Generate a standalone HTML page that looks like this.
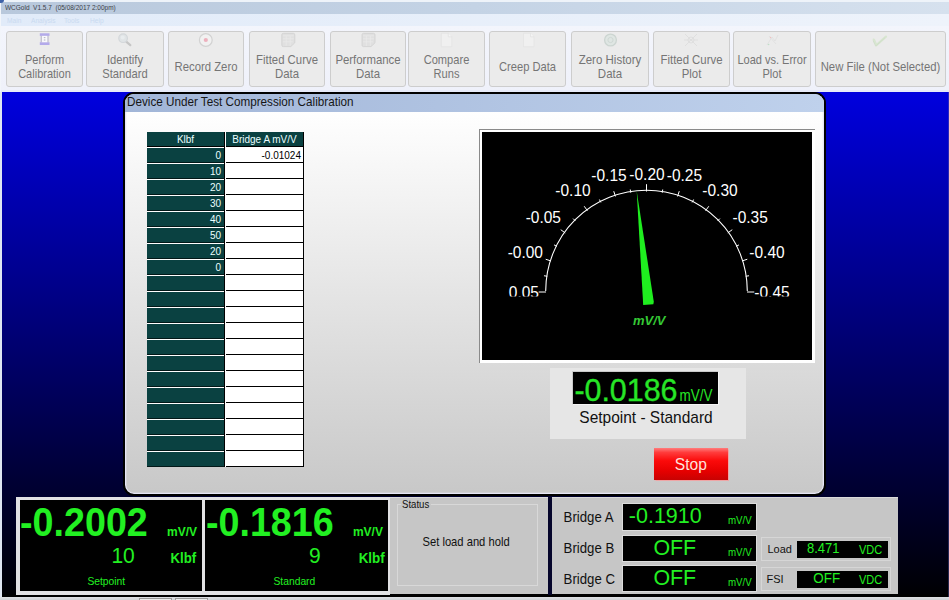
<!DOCTYPE html>
<html><head><meta charset="utf-8"><title>WCGold</title>
<style>
*{margin:0;padding:0;box-sizing:border-box}
html,body{width:949px;height:600px;overflow:hidden;background:#f0f0f0;font-family:"Liberation Sans",sans-serif;}
.a{position:absolute}
.t{position:absolute;white-space:nowrap;line-height:1}
#titlebar{left:0;top:0;width:949px;height:14px;background:linear-gradient(to right,#b8c8dc,#c4d3e5 50%,#d6e1ee)}
#topline{left:0;top:0;width:949px;height:2px;background:#eef3f9}
#menubar{left:0;top:14px;width:949px;height:12px;background:linear-gradient(to right,#e1ebf9,#eef3fb)}
#toolbar{left:0;top:26px;width:949px;height:66px;background:linear-gradient(#f3f5fc,#eff1fa);border-bottom:2px solid #e6eaf8}
.tb{position:absolute;top:31px;height:56px;background:#ebebeb;border:1px solid #cdcdcd;border-radius:3px;color:#757575;font-size:11.5px;text-align:center;line-height:14px}
.tb span{position:absolute;left:0;right:0;transform:scale(var(--sx),1.09);transform-origin:50% 11px;margin-top:-0.5px}
#blue{left:0;top:92px;width:949px;height:505px;background:linear-gradient(#0000de 0%,#000002 100%)}
#panel{left:123px;top:92px;width:703px;height:404px;border:2px solid #000;border-radius:11px;box-shadow:inset 0 0 0 1.3px #e6e6f6;background:linear-gradient(#ffffff 0%,#ffffff 4%,#c8c8c8 100%);overflow:hidden}
#ptitle{left:0;top:0;width:699px;height:17.5px;background:linear-gradient(to right,#a2b6d8,#bfd1ec)}

.hd{background:#0a4141;color:#eaffff;font-size:10px;text-align:center;line-height:15px;border-bottom:1px solid #000}
.lc{left:0;width:77px;height:15px;background:#0a4141;color:#eaffff;font-size:10px;text-align:right;padding-right:3px;line-height:15px;border-bottom:1px solid #021818}
.rc{left:79px;width:77px;height:16px;background:#fff;color:#000;font-size:10px;text-align:right;padding-right:2px;line-height:17px;border-bottom:1px solid #000}
</style></head><body>
<div class="a" id="titlebar"></div><div class="a" id="topline"></div>
<div class="t" style="left:5px;top:4px;font-size:7.5px;color:#3c4148;transform-origin:0 0;transform:scaleX(0.865)">WCGold&nbsp; V1.5.7&nbsp; (05/08/2017 2:00pm)</div>
<div class="a" id="menubar"></div>
<div class="t" style="left:7px;top:16.5px;font-size:7.5px;color:#c9daf0;transform-origin:0 0;transform:scaleX(0.88)">Main</div><div class="t" style="left:31px;top:16.5px;font-size:7.5px;color:#c9daf0;transform-origin:0 0;transform:scaleX(0.88)">Analysis</div><div class="t" style="left:64px;top:16.5px;font-size:7.5px;color:#c9daf0;transform-origin:0 0;transform:scaleX(0.88)">Tools</div><div class="t" style="left:90px;top:16.5px;font-size:7.5px;color:#c9daf0;transform-origin:0 0;transform:scaleX(0.88)">Help</div>
<div class="a" id="toolbar"></div>
<div class="a" style="left:0;top:2px;width:1.4px;height:90px;background:#f2f5fa"></div><div class="a" style="left:0;top:0;width:4px;height:3px;background:#3f63a8;border-bottom-right-radius:4px"></div>
<!--TOOLBAR0-->
<div class="tb" style="left:6px;width:77px;--sx:0.958"><span style="top:21px">Perform</span><span style="top:35px">Calibration</span></div>
<div class="tb" style="left:86px;width:78px;--sx:0.975"><span style="top:21px">Identify</span><span style="top:35px">Standard</span></div>
<div class="tb" style="left:168px;width:76px;--sx:0.985"><span style="top:28px">Record Zero</span></div>
<div class="tb" style="left:249px;width:76px;--sx:0.990"><span style="top:21px">Fitted Curve</span><span style="top:35px">Data</span></div>
<div class="tb" style="left:330px;width:76px;--sx:0.990"><span style="top:21px">Performance</span><span style="top:35px">Data</span></div>
<div class="tb" style="left:408px;width:77px;--sx:0.965"><span style="top:21px">Compare</span><span style="top:35px">Runs</span></div>
<div class="tb" style="left:489px;width:77px;--sx:0.972"><span style="top:28px">Creep Data</span></div>
<div class="tb" style="left:571px;width:78px;--sx:1.000"><span style="top:21px">Zero History</span><span style="top:35px">Data</span></div>
<div class="tb" style="left:653px;width:77px;--sx:0.990"><span style="top:21px">Fitted Curve</span><span style="top:35px">Plot</span></div>
<div class="tb" style="left:733px;width:78px;--sx:0.958"><span style="top:21px">Load vs. Error</span><span style="top:35px">Plot</span></div>
<div class="tb" style="left:815px;width:131px;--sx:0.985"><span style="top:28px">New File (Not Selected)</span></div>
<svg class="a" style="left:0;top:28px" width="949" height="24" viewBox="0 28 949 24">
<rect x="39.8" y="33.3" width="9.7" height="2.6" fill="#b3aaea"/><rect x="39.8" y="42.2" width="9.7" height="2.8" fill="#b3aaea"/><rect x="40.6" y="35.9" width="1.5" height="6.3" fill="#c4c2d2"/><rect x="47.2" y="35.9" width="1.5" height="6.3" fill="#c4c2d2"/><rect x="42.1" y="35.9" width="5.1" height="6.3" fill="#f8f8fc"/><rect x="43.8" y="37" width="1.6" height="1.2" fill="#bcbcc8"/><rect x="43.8" y="39.4" width="1.6" height="1.2" fill="#bcbcc8"/>
<path d="M126.2 41.6L130.3 45.2" stroke="#c6c6c6" stroke-width="2.2" stroke-linecap="round"/><circle cx="123.1" cy="38.2" r="4.3" fill="#e0e4e6" stroke="#d3d7da" stroke-width="1.2"/><circle cx="122.7" cy="37.5" r="2" fill="#e8ecee"/>
<circle cx="205.8" cy="40" r="6.4" fill="#f1f1f1" stroke="#d2d2d2" stroke-width="1.2"/><circle cx="205.8" cy="40" r="2.1" fill="#edb0bd"/>
<g transform="translate(281.8,33.3)"><path d="M1.5 0H11.5Q13 0 13 1.5V9.5L9 13.3H1.5Q0 13.3 0 11.8V1.5Q0 0 1.5 0Z" fill="#e0e0e0" stroke="#d0d0d0" stroke-width="0.8"/><path d="M1 2.5H12M1 5.5H12M1 8.5H11M4.3 2.5V12.5M8.3 2.5V12.5" stroke="#e9e9e9" stroke-width="0.9" fill="none"/></g>
<g transform="translate(362.0,33.3)"><path d="M1.5 0H11.5Q13 0 13 1.5V9.5L9 13.3H1.5Q0 13.3 0 11.8V1.5Q0 0 1.5 0Z" fill="#e0e0e0" stroke="#d0d0d0" stroke-width="0.8"/><path d="M1 2.5H12M1 5.5H12M1 8.5H11M4.3 2.5V12.5M8.3 2.5V12.5" stroke="#e9e9e9" stroke-width="0.9" fill="none"/></g>
<g transform="translate(441.3,33.3)"><path d="M0 0H7L10.5 3.5V13.4H0Z" fill="#f0f0f0" stroke="#e2e2e2" stroke-width="0.7"/><path d="M7 0V3.5H10.5" fill="#f4f4f4" stroke="#dedede" stroke-width="0.6"/></g>
<g transform="translate(523.5,33.3)"><path d="M0 0H7L10.5 3.5V13.4H0Z" fill="#f0f0f0" stroke="#e2e2e2" stroke-width="0.7"/><path d="M7 0V3.5H10.5" fill="#f4f4f4" stroke="#dedede" stroke-width="0.6"/></g>
<circle cx="610.5" cy="40" r="5.9" fill="#dfe6e3" stroke="#ccd5d1" stroke-width="1.3"/><circle cx="610.5" cy="40" r="2.6" fill="none" stroke="#cfd8d4" stroke-width="1"/>
<g stroke="#dedede" stroke-width="0.9" fill="none"><path d="M685 34L697 46M697 34L685 46M684 40H698"/><circle cx="691" cy="40" r="3"/></g>
<g stroke="#e0e0e0" stroke-width="0.9" fill="none"><path d="M767 45L772 37L775 41L778 35"/><path d="M769 36L776 44"/></g><circle cx="768.6" cy="44.5" r="0.8" fill="#bfe0c8"/><circle cx="770.5" cy="37.5" r="0.7" fill="#f0c0c0"/>
<path d="M873.8 39.6L876.4 45.2L886 36.6" stroke="#d8e6d1" stroke-width="2.3" fill="none" stroke-linejoin="round" stroke-linecap="round"/><path d="M873.8 39.6L876.4 45.2L886 36.6" stroke="#c6d6c0" stroke-width="0.5" fill="none" transform="translate(-0.8,0.9)"/>
</svg>
<div class="a" id="blue"></div>
<div class="a" id="panel"><div class="a" id="ptitle"></div></div>
<div class="t" style="left:127px;top:95.5px;font-size:11.7px;color:#161616;transform:scaleY(1.1);transform-origin:0 10.2px">Device Under Test Compression Calibration</div>
<div class="a" style="left:147px;top:132px;width:157px;height:335px;"><div class="a" style="left:0;top:14px;width:77px;height:321px;background:#fff"></div><div class="a" style="left:78px;top:14px;width:79px;height:321px;background:#fff"></div><div class="a hd" style="left:0;top:0;width:77px;height:15px"><span>Klbf</span></div><div class="a hd" style="left:79px;top:0;width:77px;height:15px"><span>Bridge A mV/V</span></div><div class="a lc" style="top:16px">0</div><div class="a rc" style="top:15px">-0.01024</div><div class="a lc" style="top:32px">10</div><div class="a rc" style="top:31px"></div><div class="a lc" style="top:48px">20</div><div class="a rc" style="top:47px"></div><div class="a lc" style="top:64px">30</div><div class="a rc" style="top:63px"></div><div class="a lc" style="top:80px">40</div><div class="a rc" style="top:79px"></div><div class="a lc" style="top:96px">50</div><div class="a rc" style="top:95px"></div><div class="a lc" style="top:112px">20</div><div class="a rc" style="top:111px"></div><div class="a lc" style="top:128px">0</div><div class="a rc" style="top:127px"></div><div class="a lc" style="top:144px"></div><div class="a rc" style="top:143px"></div><div class="a lc" style="top:160px"></div><div class="a rc" style="top:159px"></div><div class="a lc" style="top:176px"></div><div class="a rc" style="top:175px"></div><div class="a lc" style="top:192px"></div><div class="a rc" style="top:191px"></div><div class="a lc" style="top:208px"></div><div class="a rc" style="top:207px"></div><div class="a lc" style="top:224px"></div><div class="a rc" style="top:223px"></div><div class="a lc" style="top:240px"></div><div class="a rc" style="top:239px"></div><div class="a lc" style="top:256px"></div><div class="a rc" style="top:255px"></div><div class="a lc" style="top:272px"></div><div class="a rc" style="top:271px"></div><div class="a lc" style="top:288px"></div><div class="a rc" style="top:287px"></div><div class="a lc" style="top:304px"></div><div class="a rc" style="top:303px"></div><div class="a lc" style="top:320px"></div><div class="a rc" style="top:319px"></div><div class="a" style="left:77px;top:0;width:1px;height:335px;background:#000"></div><div class="a" style="left:156px;top:0;width:1px;height:335px;background:#000"></div></div>
<div class="a" style="left:479px;top:129px;width:336px;height:234px;background:#fff;border-left:1px solid #8a8a8a;border-top:1px solid #8a8a8a"></div>
<svg class="a" style="left:482px;top:132px" width="330" height="228" viewBox="482 132 330 228"><rect x="482" y="132" width="330" height="228" fill="#000"/>
<path d="M545.70 291.00 A100.80 100.80 0 0 1 747.30 291.00" fill="none" stroke="#fff" stroke-width="1.1"/>
<path d="M546.00 292.00L538.70 292.00M547.24 276.28L543.98 275.76M550.92 260.94L545.69 259.24M556.95 246.37L554.01 244.88M565.19 232.93L560.74 229.69M575.44 220.94L573.10 218.60M587.43 210.69L584.19 206.24M600.87 202.45L599.38 199.51M615.44 196.42L613.74 191.19M630.78 192.74L630.26 189.48M646.50 191.50L646.50 184.20M662.22 192.74L662.74 189.48M677.56 196.42L679.26 191.19M692.13 202.45L693.62 199.51M705.57 210.69L708.81 206.24M717.56 220.94L719.90 218.60M727.81 232.93L732.26 229.69M736.05 246.37L738.99 244.88M742.08 260.94L747.31 259.24M745.76 276.28L749.02 275.76M747.00 292.00L754.30 292.00" stroke="#fff" stroke-width="1" fill="none"/>
<clipPath id="gc"><rect x="482" y="132" width="330" height="164.6"/></clipPath>
<g clip-path="url(#gc)" font-family="Liberation Sans, sans-serif" font-size="15.5" fill="#fff" text-anchor="middle">
<text transform="translate(523.9,297.6) scale(1,1.09)">0.05</text>
<text transform="translate(525.3,258.3) scale(1,1.09)">-0.00</text>
<text transform="translate(543.3,223.0) scale(1,1.09)">-0.05</text>
<text transform="translate(573.0,195.8) scale(1,1.09)">-0.10</text>
<text transform="translate(609.0,180.8) scale(1,1.09)">-0.15</text>
<text transform="translate(647.0,180.0) scale(1,1.09)">-0.20</text>
<text transform="translate(684.4,180.8) scale(1,1.09)">-0.25</text>
<text transform="translate(720.0,195.8) scale(1,1.09)">-0.30</text>
<text transform="translate(750.2,223.0) scale(1,1.09)">-0.35</text>
<text transform="translate(767.0,258.3) scale(1,1.09)">-0.40</text>
<text transform="translate(772.0,297.6) scale(1,1.09)">-0.45</text>
</g>
<polygon points="636.7,191 653.8,301.8 653.3,304.3 643.2,305 " fill="#1fee1f"/>
<text x="649.3" y="325.3" font-family="Liberation Sans, sans-serif" font-size="13" font-weight="bold" font-style="italic" fill="#35c835" text-anchor="middle">mV/V</text>
</svg>
<div class="a" style="left:550px;top:368px;width:196px;height:71px;background:#e6e6e6"></div>
<div class="a" style="left:572px;top:371px;width:147px;height:34px;background:#000;border:1px solid #c9c9c9;border-right-color:#f4f4f4;border-bottom-color:#f4f4f4"></div>
<div class="a" style="left:654px;top:448px;width:74px;height:32px;background:linear-gradient(#ff7c7c 0%,#ff3c3c 14%,#fb0a0a 40%,#e60000 72%,#c80202 100%);box-shadow:0 0 1px 0.5px rgba(255,150,150,.7)"></div>

<div class="a" style="left:16px;top:497px;width:882px;height:97px;background:#c6c6c6;border-top:1px solid #dadada"></div>
<div class="a" style="left:0;top:594px;width:949px;height:3px;background:#000"></div>
<div class="a" style="left:16px;top:497px;width:374px;height:98px;background:#e2e2e4"></div>
<div class="a" style="left:20px;top:500px;width:182px;height:91px;background:#000"></div>
<div class="a" style="left:205px;top:500px;width:183px;height:91px;background:#000"></div>
<div class="a" style="left:548px;top:497px;width:4px;height:98px;background:#06062c"></div>
<div class="a" style="left:397px;top:504px;width:141px;height:82px;border:1px solid #d8d8d8"></div>
<div class="a" style="left:401px;top:499px;width:30px;height:10px;background:#c6c6c6"></div>
<div class="a" style="left:622px;top:503px;width:135px;height:28px;background:#000;border:1px solid #dcdcdc"></div>
<div class="a" style="left:622px;top:535px;width:135px;height:27px;background:#000;border:1px solid #dcdcdc"></div>
<div class="a" style="left:622px;top:565px;width:135px;height:27px;background:#000;border:1px solid #dcdcdc"></div>
<div class="a" style="left:761px;top:537px;width:130px;height:24px;border:1px solid #d6d6d6"></div>
<div class="a" style="left:761px;top:567px;width:130px;height:24px;border:1px solid #d6d6d6"></div>
<div class="a" style="left:797px;top:541px;width:91px;height:17px;background:#000"></div>
<div class="a" style="left:797px;top:571px;width:91px;height:17px;background:#000"></div>
<svg class="a" id="ov" style="left:0;top:0" width="949" height="600" font-family="Liberation Sans, sans-serif">
<g fill="#27e627" stroke="#27e627">
<text transform="translate(574.4,401) scale(1,1.06)" font-size="30.4" stroke-width="0.35">-0.0186</text>
<text transform="translate(679.6,401) scale(0.9,1.06)" font-size="15" stroke="none">mV/V</text>
</g>
<text transform="translate(579.3,423.2) scale(1,1.12)" font-size="15.5" fill="#111">Setpoint - Standard</text>
<g fill="#22f022">
<text transform="translate(20.0,536) scale(1,1.075)" font-size="37.7" font-weight="bold">-0.2002</text>
<text transform="translate(167.0,536) scale(1,1.05)" font-size="12" font-weight="bold">mV/V</text>
<text transform="translate(134.8,563.4) scale(1,1.05)" font-size="21" text-anchor="end">10</text>
<text transform="translate(170.5,563.4) scale(1,1.05)" font-size="13.2" font-weight="bold">Klbf</text>
<text transform="translate(87.4,584.7) scale(1,1.05)" font-size="10.3">Setpoint</text>
<text transform="translate(205.9,536) scale(1,1.075)" font-size="37.7" font-weight="bold">-0.1816</text>
<text transform="translate(352.9,536) scale(1,1.05)" font-size="12" font-weight="bold">mV/V</text>
<text transform="translate(320.6,563.4) scale(1,1.05)" font-size="21" text-anchor="end">9</text>
<text transform="translate(358.7,563.4) scale(1,1.05)" font-size="13.4" font-weight="bold">Klbf</text>
<text transform="translate(273.5,584.7) scale(1,1.05)" font-size="10.3">Standard</text>
<text transform="translate(628.8,523.2) scale(1,1.02)" font-size="21.5">-0.1910</text>
<text transform="translate(674.8,554.9) scale(1,1.03)" font-size="21.4" text-anchor="middle">OFF</text>
<text transform="translate(674.8,584.9) scale(1,1.03)" font-size="21.4" text-anchor="middle">OFF</text>
<text transform="translate(728,524.0) scale(1,1.05)" font-size="9.7">mV/V</text>
<text transform="translate(728,555.5) scale(1,1.05)" font-size="9.7">mV/V</text>
<text transform="translate(728,586.0) scale(1,1.05)" font-size="9.7">mV/V</text>
<text transform="translate(807,553.2) scale(1,1.12)" font-size="13">8.471</text>
<text transform="translate(826.7,583) scale(1,1.05)" font-size="13.4" text-anchor="middle">OFF</text>
<text transform="translate(859,553.8) scale(1,1.1)" font-size="11">VDC</text>
<text transform="translate(859,584) scale(1,1.1)" font-size="11">VDC</text>
</g><g fill="#111">
<text transform="translate(402,507.8) scale(1,1.08)" font-size="9.6">Status</text>
<text transform="translate(422.5,546.1) scale(1,1.14)" font-size="11.2">Set load and hold</text>
<text transform="translate(563.6,521.5) scale(1,1.07)" font-size="13.2">Bridge A</text>
<text transform="translate(563.6,552.5) scale(1,1.07)" font-size="13.2">Bridge B</text>
<text transform="translate(563.6,583.5) scale(1,1.07)" font-size="13.2">Bridge C</text>
<text transform="translate(767.5,552.8) scale(1,1.05)" font-size="11">Load</text>
<text transform="translate(766.5,583.1) scale(1,1.05)" font-size="11">FSI</text>
</g>
<text transform="translate(690.9,470.4) scale(1,1.09)" font-size="15.6" fill="#ffe2dc" text-anchor="middle">Stop</text>
<!--OVTEXT-->
</svg>
<!--BOTTOM2-->
<div class="a" style="left:0;top:92px;width:1.5px;height:505px;background:#dfe6f2"></div>
<div class="a" style="left:948px;top:92px;width:1px;height:505px;background:rgba(90,94,170,.45)"></div>
<div class="a" style="left:0;top:597px;width:949px;height:3px;background:linear-gradient(#dfe1e4,#cfd2d6)"></div>
<div class="a" style="left:139px;top:598px;width:33px;height:3px;background:#ececec;border:1px solid #9a9a9a;border-bottom:0"></div>
<div class="a" style="left:175px;top:598px;width:33px;height:3px;background:#ececec;border:1px solid #9a9a9a;border-bottom:0"></div>
</body></html>
